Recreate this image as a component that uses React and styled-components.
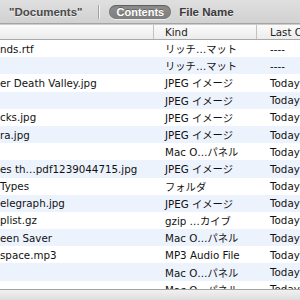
import styled, { createGlobalStyle } from "styled-components";

const GlobalStyle = createGlobalStyle`
  html, body {
    margin: 0;
    padding: 0;
    background: #ffffff;
  }
  #root {
    width: 300px;
    height: 300px;
  }
`;

const Window = styled.div`
  width: 300px;
  height: 300px;
  overflow: hidden;
  display: flex;
  flex-direction: column;
  font-family: "DejaVu Sans", "Noto Sans CJK JP", sans-serif;
  font-size: 10.3px;
  color: #111;
`;

const ScopeBar = styled.div`
  flex: 0 0 23px;
  display: flex;
  align-items: center;
  padding-left: 9px;
  background: linear-gradient(#dfdfdf, #d1d1d1);
  border-bottom: 1px solid #a4a4a4;
  font-family: "Liberation Sans", Arial, sans-serif;
  font-weight: bold;
  font-size: 11.5px;
  white-space: nowrap;
`;

const ScopeLabel = styled.span`
  color: ${(p) => (p.$dark ? "#3a3a3a" : "#4a4a4a")};
  text-shadow: 0 1px 0 rgba(255, 255, 255, 0.6);
`;

const Separator = styled.span`
  width: 1px;
  height: 14px;
  margin: 0 10px 0 15px;
  background: #a2a2a2;
  box-shadow: 1px 0 0 rgba(255, 255, 255, 0.7);
`;

const Pill = styled.span`
  display: inline-flex;
  align-items: center;
  height: 14px;
  padding: 0 7px 0 8px;
  margin-right: 8px;
  border-radius: 7px;
  background: linear-gradient(#8e8e8e, #7d7d7d);
  box-shadow: inset 0 1px 1px rgba(0, 0, 0, 0.35), 0 1px 0 rgba(255, 255, 255, 0.6);
  color: #ffffff;
  font-size: 11px;
  text-shadow: 0 -1px 0 rgba(0, 0, 0, 0.3);
`;

const Columns = "154px 103px 1fr";

const Header = styled.div`
  flex: 0 0 14px;
  display: grid;
  grid-template-columns: ${Columns};
  background: linear-gradient(#fbfbfb, #ececec);
  border-top: 1px solid #cdcdcd;
  border-bottom: 1px solid #aaaaaa;
  white-space: nowrap;
`;

const HeaderCell = styled.div`
  display: flex;
  align-items: center;
  padding-left: ${(p) => p.$pad || 0}px;
  border-right: ${(p) => (p.$last ? "none" : "1px solid #c2c2c2")};
  overflow: hidden;
  color: #222;
`;

const List = styled.div`
  flex: 1;
  overflow: hidden;
`;

const Row = styled.div`
  height: 17.2px;
  display: grid;
  grid-template-columns: ${Columns};
  align-items: center;
  background: ${(p) => (p.$alt ? "#edf3fd" : "#ffffff")};
  white-space: nowrap;
`;

const Cell = styled.div`
  padding-left: ${(p) => p.$pad || 0}px;
  overflow: hidden;
`;

const BottomBar = styled.div`
  flex: 0 0 10px;
  border-top: 1px solid #a3a3a3;
  background: linear-gradient(#f1f1f1, #dedede);
`;

const files = [
  { name: "nds.rtf", kind: "リッチ…マット", date: "----" },
  { name: "", kind: "リッチ…マット", date: "----" },
  { name: "er Death Valley.jpg", kind: "JPEG イメージ", date: "Today" },
  { name: "", kind: "JPEG イメージ", date: "Today" },
  { name: "cks.jpg", kind: "JPEG イメージ", date: "Today" },
  { name: "ra.jpg", kind: "JPEG イメージ", date: "Today" },
  { name: "", kind: "Mac O…パネル", date: "Today" },
  { name: "es th…pdf1239044715.jpg", kind: "JPEG イメージ", date: "Today" },
  { name: "Types", kind: "フォルダ", date: "Today" },
  { name: "elegraph.jpg", kind: "JPEG イメージ", date: "Today" },
  { name: "plist.gz", kind: "gzip …カイブ", date: "Today" },
  { name: "een Saver", kind: "Mac O…パネル", date: "Today" },
  { name: "space.mp3", kind: "MP3 Audio File", date: "Today" },
  { name: "", kind: "Mac O…パネル", date: "Today" },
  { name: "", kind: "Mac O…パネル", date: "Today" },
];

export default function App() {
  return (
    <>
      <GlobalStyle />
      <Window>
        <ScopeBar>
          <ScopeLabel>"Documents"</ScopeLabel>
          <Separator />
          <Pill>Contents</Pill>
          <ScopeLabel $dark>File Name</ScopeLabel>
        </ScopeBar>
        <Header>
          <HeaderCell />
          <HeaderCell $pad={11}>Kind</HeaderCell>
          <HeaderCell $pad={13} $last>
            Last Opened
          </HeaderCell>
        </Header>
        <List>
          {files.map((f, i) => (
            <Row key={i} $alt={i % 2 === 1}>
              <Cell>{f.name}</Cell>
              <Cell $pad={11}>{f.kind}</Cell>
              <Cell $pad={13}>{f.date}</Cell>
            </Row>
          ))}
        </List>
        <BottomBar />
      </Window>
    </>
  );
}
